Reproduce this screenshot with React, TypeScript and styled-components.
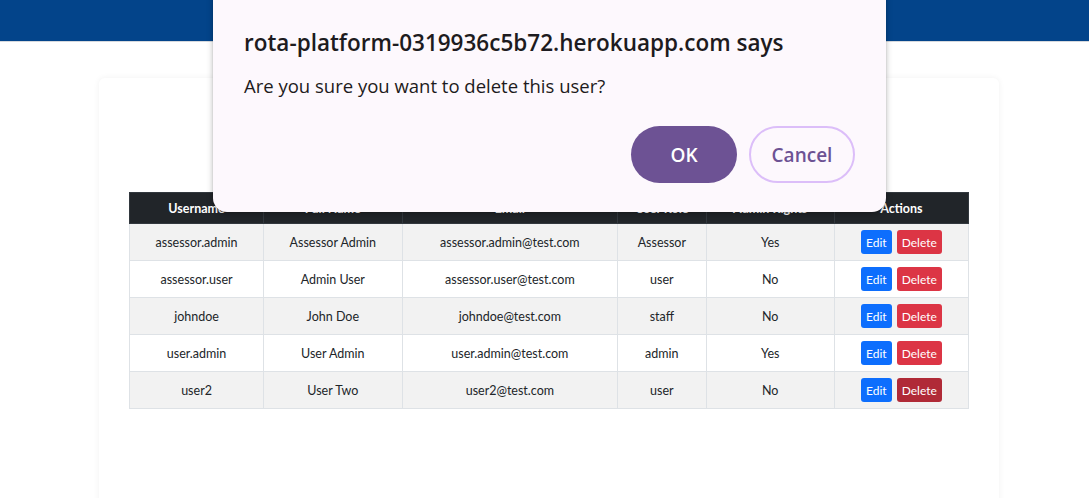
import React from 'react'
import styled, { createGlobalStyle } from 'styled-components'

const GlobalStyle = createGlobalStyle`
  html, body {
    margin: 0;
    padding: 0;
    background: #ffffff;
    overflow: hidden;
  }
  body {
    font-family: "Open Sans", "Noto Sans", Arial, sans-serif;
    color: #212529;
  }
`

const Page = styled.div`
  position: relative;
  width: 1089px;
  height: 498px;
  overflow: hidden;
`

const TopBar = styled.div`
  height: 41px;
  background: #03448a;
  border-bottom: 1px solid #d6d9dd;
`

const Main = styled.div`
  display: flex;
  justify-content: center;
  padding: 36px 0 0 9px;
`

const Card = styled.div`
  width: 900px;
  height: 460px;
  background: #ffffff;
  border-radius: 6px;
  box-shadow: 0 0 6px rgba(0, 0, 0, 0.06);
  padding: 114px 30px 0;
  box-sizing: border-box;
`

const Table = styled.table`
  width: 840px;
  border-collapse: collapse;
  font-family: Lato, "Open Sans", Arial, sans-serif;
  font-size: 12.5px;
  text-align: center;
`

const HeadCell = styled.th<{ w: number }>`
  width: ${(p) => p.w}px;
  height: 30px;
  background: #212529;
  color: #ffffff;
  font-weight: 700;
  border: 1px solid #32383e;
  padding: 0;
`

const Row = styled.tr<{ striped: boolean }>`
  background: ${(p) => (p.striped ? '#f2f2f2' : '#ffffff')};
`

const Cell = styled.td`
  height: 36px;
  border: 1px solid #dee2e6;
  padding: 0;
  color: #212529;
`

const Actions = styled.div`
  display: flex;
  justify-content: center;
  gap: 5px;
`

const SmallButton = styled.button<{ kind: 'edit' | 'delete' | 'deleteHover' }>`
  height: 24px;
  padding: 0 5px;
  border: none;
  border-radius: 3px;
  font-family: inherit;
  font-size: 12px;
  color: #ffffff;
  background: ${(p) =>
    p.kind === 'edit' ? '#0d6efd' : p.kind === 'delete' ? '#dc3545' : '#b02a37'};
`

const Dialog = styled.div`
  position: absolute;
  left: 213px;
  top: -14px;
  width: 673px;
  height: 226px;
  box-sizing: border-box;
  background: #fdf8fd;
  border-radius: 14px;
  box-shadow: 0 2px 6px rgba(0, 0, 0, 0.28), 0 0 1px rgba(0, 0, 0, 0.3);
  padding: 42px 31px 0;
`

const DialogTitle = styled.div`
  font-size: 22.5px;
  font-weight: 600;
  color: #1d1b20;
  line-height: 30px;
`

const DialogText = styled.div`
  margin-top: 15px;
  font-size: 18.5px;
  color: #1d1b20;
  line-height: 26px;
`

const DialogButtons = styled.div`
  display: flex;
  justify-content: flex-end;
  gap: 12px;
  margin-top: 27px;
`

const PillButton = styled.button<{ primary?: boolean }>`
  width: 106px;
  height: 57px;
  border-radius: 29px;
  font-family: inherit;
  font-size: 19px;
  font-weight: 600;
  box-sizing: border-box;
  border: ${(p) => (p.primary ? 'none' : '2px solid #dcbef9')};
  background: ${(p) => (p.primary ? '#6d5294' : '#fdf8fd')};
  color: ${(p) => (p.primary ? '#ffffff' : '#6d5294')};
`

const columns = [
  { label: 'Username', w: 134 },
  { label: 'Full Name', w: 139 },
  { label: 'Email', w: 216 },
  { label: 'User Role', w: 88 },
  { label: 'Admin Rights', w: 129 },
  { label: 'Actions', w: 134 },
]

const users = [
  ['assessor.admin', 'Assessor Admin', 'assessor.admin@test.com', 'Assessor', 'Yes'],
  ['assessor.user', 'Admin User', 'assessor.user@test.com', 'user', 'No'],
  ['johndoe', 'John Doe', 'johndoe@test.com', 'staff', 'No'],
  ['user.admin', 'User Admin', 'user.admin@test.com', 'admin', 'Yes'],
  ['user2', 'User Two', 'user2@test.com', 'user', 'No'],
]

export default function App() {
  return (
    <Page>
      <GlobalStyle />
      <TopBar />
      <Main>
        <Card>
          <Table>
            <thead>
              <tr>
                {columns.map((c) => (
                  <HeadCell key={c.label} w={c.w}>
                    {c.label}
                  </HeadCell>
                ))}
              </tr>
            </thead>
            <tbody>
              {users.map((u, i) => (
                <Row key={u[0]} striped={i % 2 === 0}>
                  {u.map((v, j) => (
                    <Cell key={j}>{v}</Cell>
                  ))}
                  <Cell>
                    <Actions>
                      <SmallButton kind="edit">Edit</SmallButton>
                      <SmallButton kind={i === users.length - 1 ? 'deleteHover' : 'delete'}>
                        Delete
                      </SmallButton>
                    </Actions>
                  </Cell>
                </Row>
              ))}
            </tbody>
          </Table>
        </Card>
      </Main>
      <Dialog>
        <DialogTitle>rota-platform-0319936c5b72.herokuapp.com says</DialogTitle>
        <DialogText>Are you sure you want to delete this user?</DialogText>
        <DialogButtons>
          <PillButton primary>OK</PillButton>
          <PillButton>Cancel</PillButton>
        </DialogButtons>
      </Dialog>
    </Page>
  )
}
